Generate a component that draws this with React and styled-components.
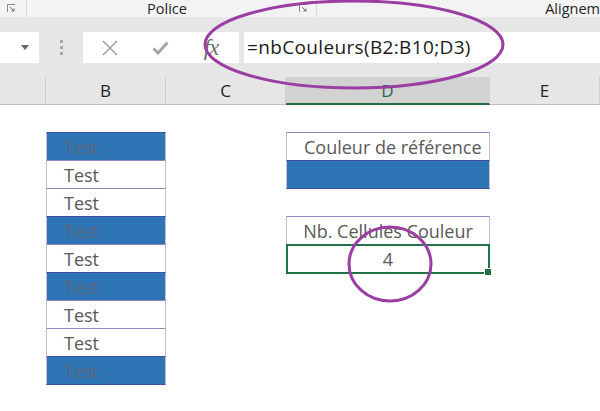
import React from 'react';
import styled, { createGlobalStyle } from 'styled-components';

const GlobalStyle = createGlobalStyle`
  html, body {
    margin: 0;
    padding: 0;
    background: #ffffff;
  }
  body {
    font-family: "Open Sans", "Noto Sans", sans-serif;
  }
`;

const Page = styled.div`
  position: relative;
  width: 600px;
  height: 411px;
  overflow: hidden;
  background: #ffffff;
`;

const Ribbon = styled.div`
  display: flex;
  height: 18px;
  margin-bottom: -1px;
  background: #f3f3f3;
  border-bottom: 1px solid #e0e0e0;
  box-sizing: border-box;
`;

const RibbonGroup = styled.div`
  display: flex;
  align-items: center;
  width: ${(p) => p.width}px;
  flex-shrink: 0;
  border-right: ${(p) => (p.last ? 'none' : '1px solid #dcdcdc')};
  padding: 0 ${(p) => p.pad || 0}px;
  box-sizing: border-box;
`;

const GroupLabel = styled.span`
  flex: 1;
  text-align: ${(p) => p.align || 'center'};
  font-size: 14.5px;
  line-height: 17px;
  color: #262626;
  white-space: nowrap;
`;

const Launcher = () => (
  <svg width="9" height="9" viewBox="0 0 9 9">
    <path d="M0.5 8 V0.5 H8" fill="none" stroke="#8a8a8a" strokeWidth="1" />
    <path d="M3 3 L7 7 M7 4.5 V7 H4.5" fill="none" stroke="#6a6a6a" strokeWidth="1" />
  </svg>
);

const FormulaArea = styled.div`
  display: flex;
  align-items: flex-start;
  height: 60px;
  padding-top: 15px;
  box-sizing: border-box;
  background: #e6e6e6;
`;

const NameBox = styled.div`
  display: flex;
  align-items: center;
  justify-content: flex-end;
  width: 39px;
  height: 31px;
  padding-right: 10px;
  box-sizing: border-box;
  background: #ffffff;
`;

const Caret = styled.span`
  width: 0;
  height: 0;
  border-left: 4px solid transparent;
  border-right: 4px solid transparent;
  border-top: 5px solid #666666;
`;

const Grip = styled.div`
  display: flex;
  flex-direction: column;
  align-items: center;
  justify-content: center;
  gap: 3px;
  width: 44px;
  height: 31px;
`;

const GripDot = styled.span`
  width: 3px;
  height: 3px;
  background: #a6a6a6;
`;

const ActionBox = styled.div`
  display: flex;
  align-items: center;
  width: 156px;
  height: 31px;
  background: #ffffff;
`;

const ActionButton = styled.div`
  display: flex;
  align-items: center;
  justify-content: center;
  width: ${(p) => p.width}px;
  height: 31px;
`;

const FxLabel = styled.span`
  font-family: "Liberation Serif", "DejaVu Serif", serif;
  font-style: italic;
  font-size: 23px;
  line-height: 31px;
  color: #6e6e6e;
  letter-spacing: -1px;
`;

const FormulaInput = styled.div`
  flex: 1;
  height: 31px;
  margin-left: 5px;
  padding-left: 3px;
  box-sizing: border-box;
  background: #ffffff;
  font-size: 19px;
  letter-spacing: 0.35px;
  line-height: 31px;
  color: #1a1a1a;
  white-space: nowrap;
`;

const HeaderRow = styled.div`
  display: grid;
  grid-template-columns: 46px 120px 120px 204px 1fr;
  height: 28px;
  background: #e6e6e6;
  border-bottom: 1px solid #bdbdbd;
  box-sizing: border-box;
`;

const ColHeader = styled.div`
  display: flex;
  align-items: center;
  justify-content: center;
  box-sizing: border-box;
  border-right: 1px solid #d0d0d0;
  font-size: 17px;
  color: ${(p) => (p.selected ? '#1f6b3f' : '#222222')};
  background: ${(p) => (p.selected ? '#d2d2d2' : 'transparent')};
  border-bottom: ${(p) => (p.selected ? '2px solid #217346' : 'none')};
  margin-bottom: ${(p) => (p.selected ? '-1px' : '0')};
`;

const Sheet = styled.div`
  display: grid;
  grid-template-columns: 46px 120px 120px 204px 1fr;
  grid-auto-rows: 28px;
`;

const Cell = styled.div`
  grid-column: ${(p) => p.col};
  grid-row: ${(p) => p.row};
  display: flex;
  align-items: center;
  justify-content: ${(p) => (p.center ? 'center' : 'flex-start')};
  padding-left: ${(p) => (p.center ? 0 : 17)}px;
  box-sizing: border-box;
  background: ${(p) => (p.filled ? '#2e75b6' : '#ffffff')};
  border-left: 1px solid #c9b9de;
  border-right: 1px solid #c9b9de;
  border-top: 1px solid ${(p) => (p.filled ? '#3c4fa0' : '#9a82bf')};
  border-bottom: 1px solid ${(p) => (p.filled ? '#3c4fa0' : '#9a82bf')};
  margin-top: -1px;
  font-size: 18px;
  color: ${(p) => (p.filled ? '#5b6777' : '#595959')};
  white-space: nowrap;
`;

const ActiveCell = styled(Cell)`
  position: relative;
  border: 2px solid #217346;
  margin-top: -1px;
  height: 30px;
`;

const FillHandle = styled.span`
  position: absolute;
  right: -4px;
  bottom: -4px;
  width: 6px;
  height: 6px;
  background: #217346;
  border: 1px solid #ffffff;
`;

const Annotations = styled.svg`
  position: absolute;
  left: 0;
  top: 0;
  width: 600px;
  height: 411px;
  pointer-events: none;
`;

const testRows = [true, false, false, true, false, true, false, false, true];

export default function App() {
  return (
    <Page>
      <GlobalStyle />
      <Ribbon>
        <RibbonGroup width={27} pad={7}>
          <Launcher />
        </RibbonGroup>
        <RibbonGroup width={290} pad={8}>
          <GroupLabel>Police</GroupLabel>
          <Launcher />
        </RibbonGroup>
        <RibbonGroup width={283} last>
          <GroupLabel align="right">Alignem</GroupLabel>
        </RibbonGroup>
      </Ribbon>

      <FormulaArea>
        <NameBox>
          <Caret />
        </NameBox>
        <Grip>
          <GripDot />
          <GripDot />
          <GripDot />
        </Grip>
        <ActionBox>
          <ActionButton width={54}>
            <svg width="16" height="16" viewBox="0 0 16 16">
              <path d="M1 1 L15 15 M15 1 L1 15" stroke="#a3a3a3" strokeWidth="1.6" />
            </svg>
          </ActionButton>
          <ActionButton width={46}>
            <svg width="17" height="14" viewBox="0 0 17 14">
              <path d="M1.5 7.5 L6 12 L15.5 1.5" fill="none" stroke="#a3a3a3" strokeWidth="2.8" />
            </svg>
          </ActionButton>
          <ActionButton width={56}>
            <FxLabel>fx</FxLabel>
          </ActionButton>
        </ActionBox>
        <FormulaInput>=nbCouleurs(B2:B10;D3)</FormulaInput>
      </FormulaArea>

      <HeaderRow>
        <ColHeader />
        <ColHeader>B</ColHeader>
        <ColHeader>C</ColHeader>
        <ColHeader selected>D</ColHeader>
        <ColHeader>E</ColHeader>
      </HeaderRow>

      <Sheet>
        {testRows.map((filled, i) => (
          <Cell key={i} col={2} row={i + 2} filled={filled}>
            Test
          </Cell>
        ))}
        <Cell col={4} row={2}>Couleur de référence</Cell>
        <Cell col={4} row={3} filled />
        <Cell col={4} row={5} center>Nb. Cellules Couleur</Cell>
        <ActiveCell col={4} row={6} center>
          4
          <FillHandle />
        </ActiveCell>
      </Sheet>

      <Annotations viewBox="0 0 600 411">
        <ellipse cx="354" cy="44.5" rx="149" ry="43.5" fill="none" stroke="#9b3ea3" strokeWidth="3" />
        <ellipse cx="390" cy="264" rx="41" ry="37" fill="none" stroke="#9b3ea3" strokeWidth="3" />
      </Annotations>
    </Page>
  );
}
